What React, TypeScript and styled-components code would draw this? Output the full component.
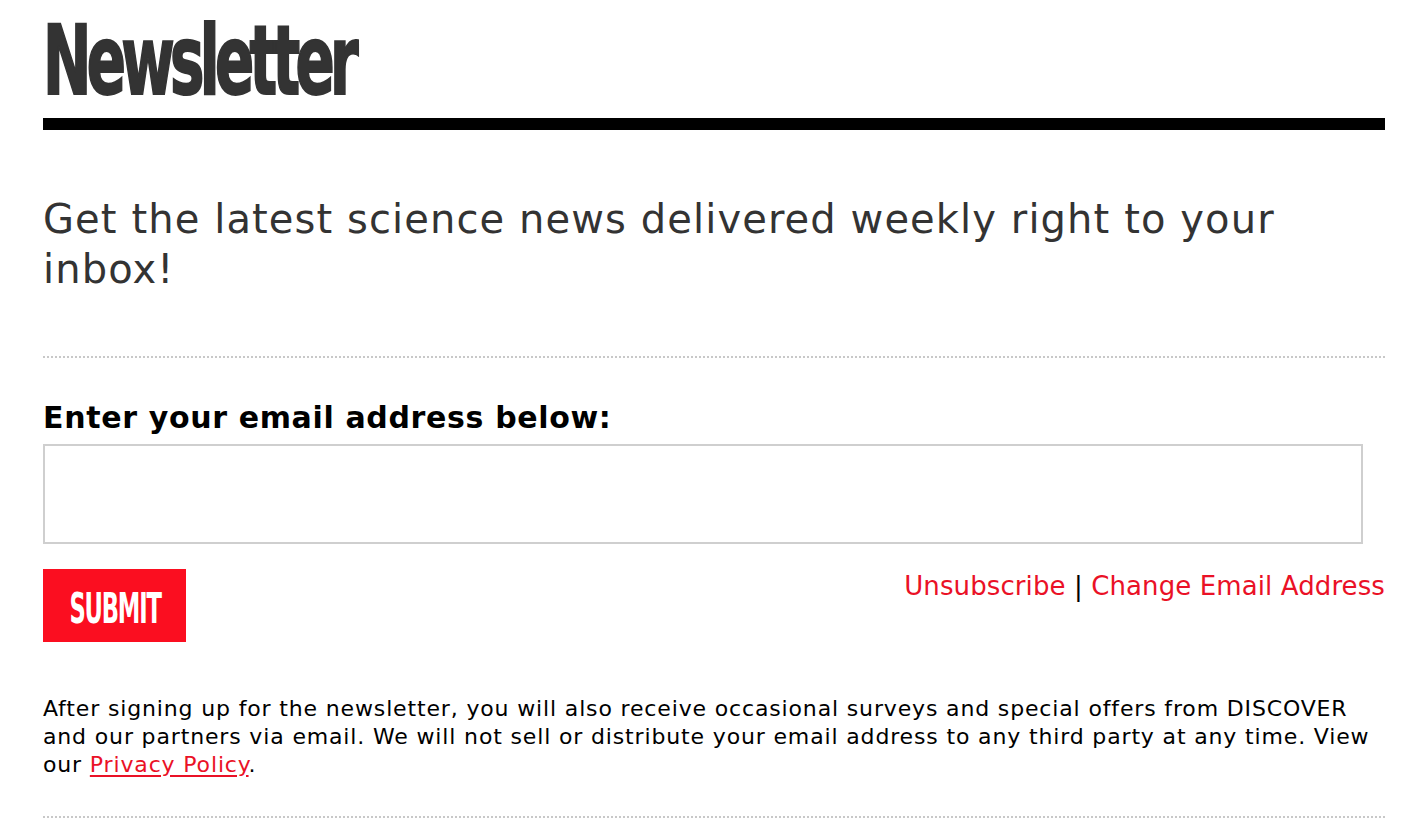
import styled, { createGlobalStyle } from 'styled-components';

const GlobalStyle = createGlobalStyle`
  body {
    margin: 0;
    background: #fff;
    font-family: 'DejaVu Sans', Verdana, sans-serif;
  }
`;

const Page = styled.div`
  padding: 0 41px 0 43px;
  width: 1342px;
`;

// condensed display face: squeeze the condensed sans a bit further
const Title = styled.h1<{ squeeze: number }>`
  margin: 0;
  height: 118px;
  font-family: 'DejaVu Sans Condensed', 'DejaVu Sans', sans-serif;
  font-stretch: condensed;
  font-weight: 700;
  font-size: 96px;
  line-height: 118px;
  color: #333;
  letter-spacing: -7px;
  white-space: nowrap;

  span {
    display: inline-block;
    transform-origin: left bottom;
    transform: translateY(2px) scaleX(${(p) => p.squeeze});
    -webkit-text-stroke: 2px #333;
  }
`;

const Rule = styled.hr`
  margin: 0;
  border: 0;
  height: 12px;
  background: #000;
`;

const Lead = styled.p`
  margin: 64px 0 0;
  font-size: 40px;
  line-height: 50px;
  color: #333;
  letter-spacing: 1.1px;
`;

const Dotted = styled.div<{ top: number }>`
  margin-top: ${(p) => p.top}px;
  border-top: 2px dotted #c8c8c8;
`;

const Label = styled.label`
  display: block;
  margin-top: 40px;
  font-size: 30px;
  font-weight: 700;
  line-height: 40px;
  color: #000;
  letter-spacing: 0.65px;
`;

const EmailInput = styled.input`
  display: block;
  box-sizing: border-box;
  margin-top: 6px;
  width: 1320px;
  height: 100px;
  border: 2px solid #cfcfcf;
  outline: none;
  font-size: 24px;
  padding: 0 12px;
`;

const Actions = styled.div`
  display: flex;
  justify-content: space-between;
  align-items: flex-start;
  margin-top: 25px;
`;

const SubmitButton = styled.button`
  width: 143px;
  height: 73px;
  border: 0;
  background: #fb0e20;
  color: #fff;
  font-family: 'DejaVu Sans Condensed', 'DejaVu Sans', sans-serif;
  font-stretch: condensed;
  font-weight: 700;
  font-size: 42px;
  letter-spacing: -2px;
  padding: 0;
  cursor: pointer;

  span {
    display: inline-block;
    transform: translate(-4px, 3px) scaleX(0.6);
  }
`;

const Links = styled.div`
  font-size: 26px;
  line-height: 34px;
  letter-spacing: 0.1px;
  color: #000;
`;

const RedLink = styled.a<{ underline?: boolean }>`
  color: #ea1126;
  text-decoration: ${(p) => (p.underline ? 'underline' : 'none')};
  text-underline-offset: 3px;
`;

const Notice = styled.p`
  margin: 53px 0 0;
  font-size: 22px;
  line-height: 28px;
  letter-spacing: 0.85px;
  color: #000;
`;

export default function App() {
  return (
    <>
      <GlobalStyle />
      <Page>
        <Title squeeze={0.67}>
          <span>Newsletter</span>
        </Title>
        <Rule />
        <Lead>Get the latest science news delivered weekly right to your inbox!</Lead>
        <Dotted top={62} />
        <Label htmlFor="email">Enter your email address below:</Label>
        <EmailInput id="email" type="email" />
        <Actions>
          <SubmitButton type="submit">
            <span>SUBMIT</span>
          </SubmitButton>
          <Links>
            <RedLink href="#">Unsubscribe</RedLink> | <RedLink href="#">Change Email Address</RedLink>
          </Links>
        </Actions>
        <Notice>
          After signing up for the newsletter, you will also receive occasional surveys and special offers from
          DISCOVER and our partners via email. We will not sell or distribute your email address to any third party
          at any time. View our{' '}
          <RedLink href="#" underline>
            Privacy Policy
          </RedLink>
          .
        </Notice>
        <Dotted top={37} />
      </Page>
    </>
  );
}
